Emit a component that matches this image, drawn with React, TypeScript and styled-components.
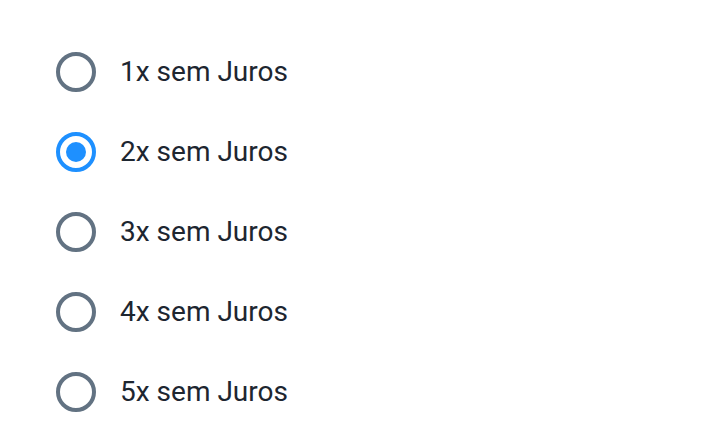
import React, { useState } from "react";
import styled, { createGlobalStyle } from "styled-components";

const Global = createGlobalStyle`
  html, body { margin: 0; padding: 0; background: #ffffff; }
  body { font-family: Roboto, "Noto Sans", sans-serif; }
`;

const List = styled.div`
  display: flex;
  flex-direction: column;
  padding: 32px 0 0 56px;
`;

const Row = styled.label`
  display: flex;
  align-items: center;
  gap: 24px;
  height: 80px;
  cursor: pointer;
`;

const Radio = styled.span<{ $checked: boolean }>`
  box-sizing: border-box;
  width: 40px;
  height: 40px;
  border-radius: 50%;
  border: 4px solid ${(p) => (p.$checked ? "#1e90ff" : "#627282")};
  display: flex;
  align-items: center;
  justify-content: center;
  flex-shrink: 0;

  &::after {
    content: "";
    display: ${(p) => (p.$checked ? "block" : "none")};
    width: 20px;
    height: 20px;
    border-radius: 50%;
    background: #1e90ff;
  }
`;

const Label = styled.span`
  font-size: 28px;
  color: #1d2630;
  line-height: 1;
`;

const options = [1, 2, 3, 4, 5];

export default function App() {
  const [selected, setSelected] = useState(2);
  return (
    <>
      <Global />
      <List>
        {options.map((n) => (
          <Row key={n} onClick={() => setSelected(n)}>
            <Radio $checked={selected === n} />
            <Label>{n}x sem Juros</Label>
          </Row>
        ))}
      </List>
    </>
  );
}
